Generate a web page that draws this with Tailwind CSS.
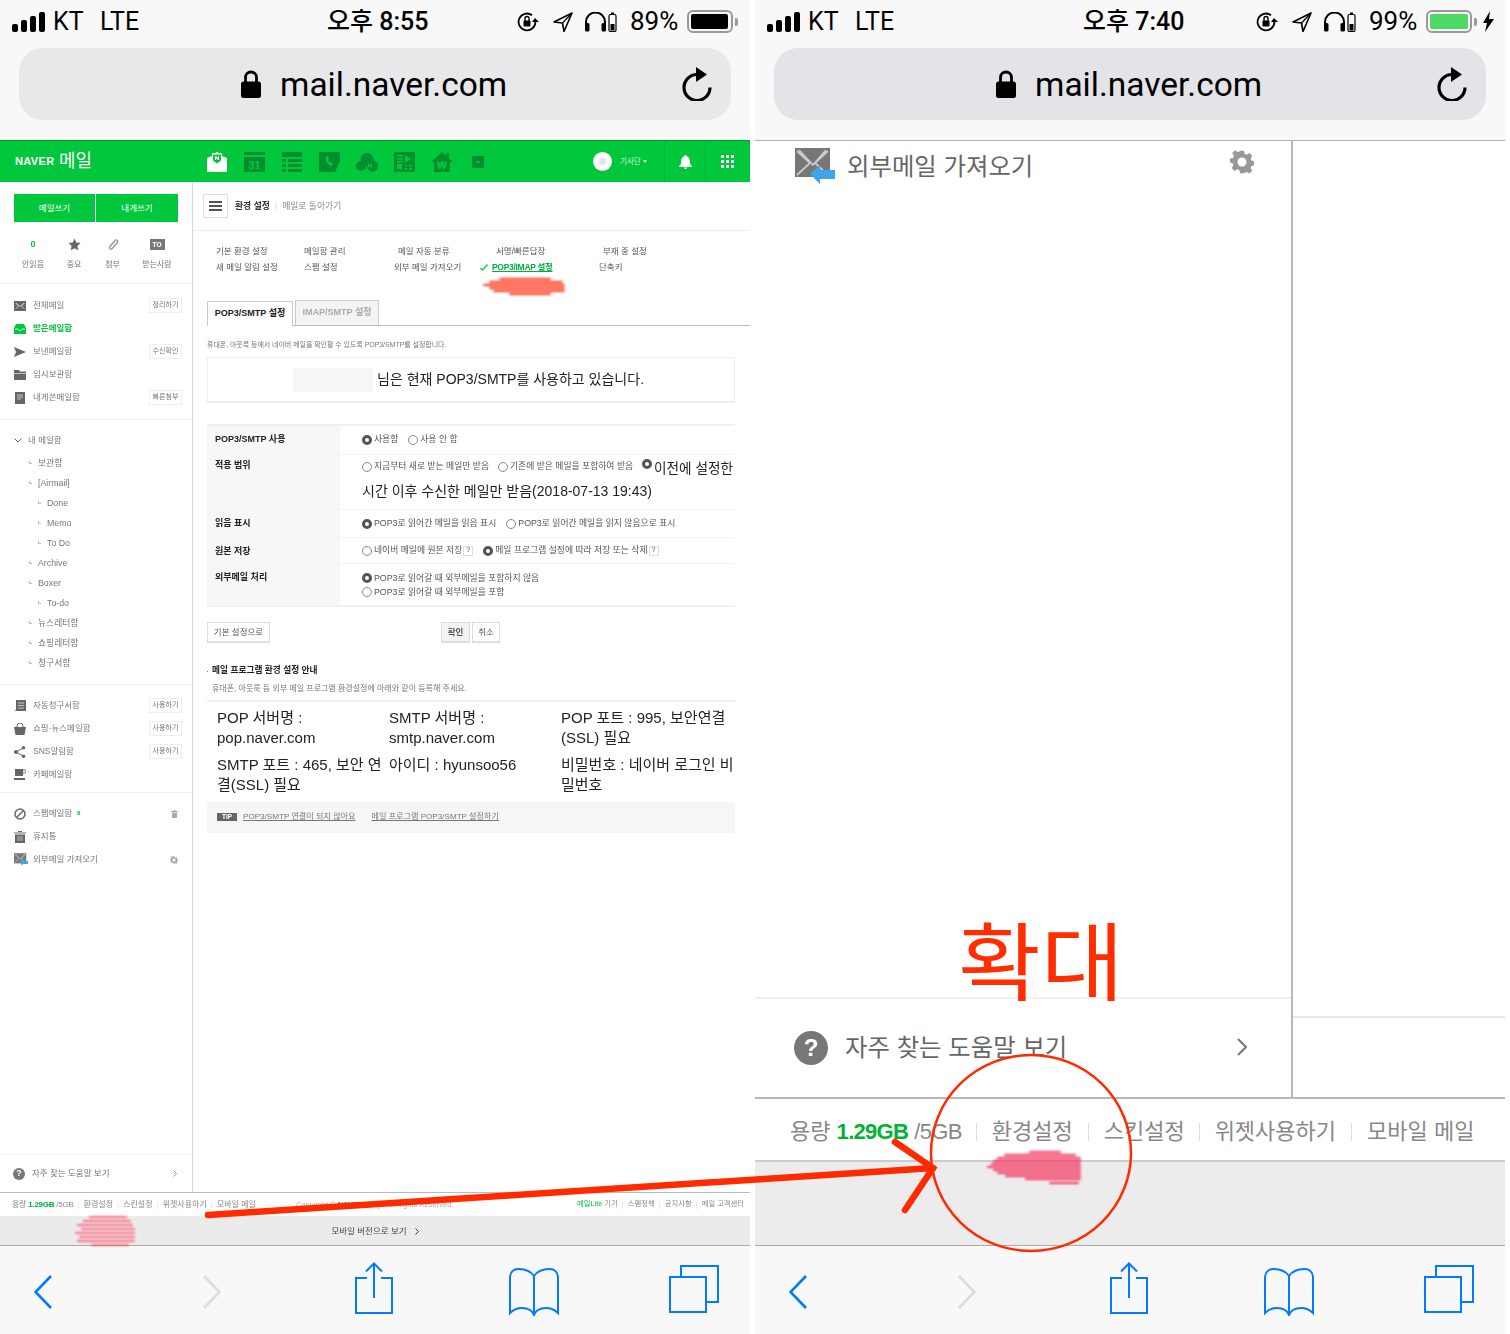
<!DOCTYPE html>
<html lang="ko">
<head>
<meta charset="UTF-8">
<title>POP3/SMTP 설정</title>
<script src="https://cdn.jsdelivr.net/npm/@tailwindcss/browser@4"></script>
</head>
<body class="bg-white font-['Liberation_Sans','Noto_Sans_CJK_KR',sans-serif]">

<svg class="hidden">
  <symbol id="signal" viewBox="0 0 33 20"><rect x="0" y="12" width="6" height="8" rx="2"/><rect x="9" y="8" width="6" height="12" rx="2"/><rect x="18" y="4" width="6" height="16" rx="2"/><rect x="27" y="0" width="6" height="20" rx="2"/></symbol>
  <symbol id="rotlock" viewBox="0 0 22 20"><path d="M15 3.2A8.4 8.4 0 1 0 18.4 10" fill="none" stroke="currentColor" stroke-width="1.8"/><path d="M18 6l4 4h-7z"/><rect x="6.5" y="8.5" width="7" height="6" rx="1"/><path d="M8 9V6.5a2 2 0 0 1 4 0V9" fill="none" stroke="currentColor" stroke-width="1.4"/></symbol>
  <symbol id="location" viewBox="0 0 20 20"><path d="M19 1L1 10l8.500 1L11 19.500z" fill="none" stroke="currentColor" stroke-width="1.600" stroke-linejoin="round"/><path d="M19 1L9.500 11" stroke="currentColor" stroke-width="1.200"/></symbol>
  <symbol id="headphones" viewBox="0 0 33 20"><path d="M2 17V10a9.500 9.500 0 0 1 19 0v7" fill="none" stroke="currentColor" stroke-width="2"/><rect x="1" y="11" width="4.500" height="8.500" rx="1.500"/><rect x="17.500" y="11" width="4.500" height="8.500" rx="1.500"/><rect x="25" y="2.500" width="7" height="17" rx="1.500" fill="none" stroke="currentColor" stroke-width="1.200"/><rect x="27" y="0.500" width="3" height="2"/><rect x="26.500" y="12" width="4" height="6.500"/></symbol>
  <symbol id="lock" viewBox="0 0 20 28"><path d="M4.500 13V7.500a5.500 5.500 0 0 1 11 0V13" fill="none" stroke="currentColor" stroke-width="2.800"/><rect x="0" y="11.500" width="20" height="16.500" rx="2.500"/></symbol>
  <symbol id="reload" viewBox="0 0 30 34"><path d="M15 7.500A13 13 0 1 0 28 20.500" fill="none" stroke="currentColor" stroke-width="3.200"/><path d="M14 0l11 7.500-11 7.500z"/></symbol>
  <symbol id="back" viewBox="0 0 18 34"><path d="M17 1L1.500 17 17 33" fill="none" stroke="currentColor" stroke-width="2.600"/></symbol>
  <symbol id="forward" viewBox="0 0 18 34"><path d="M1 1l15.500 16L1 33" fill="none" stroke="currentColor" stroke-width="2.600"/></symbol>
  <symbol id="share" viewBox="0 0 38 52"><path d="M12 16H1v35h36V16H26" fill="none" stroke="currentColor" stroke-width="2"/><path d="M19 36V1.500M11 9.500l8-8 8 8" fill="none" stroke="currentColor" stroke-width="2"/></symbol>
  <symbol id="book" viewBox="0 0 50 48"><path d="M25 8C21 2 14 1 9 1 5 1 1 4 1 9v36c4-4 8-5 12-5 5 0 10 2 12 7 2-5 7-7 12-7 4 0 8 1 12 5V9c0-5-4-8-8-8-5 0-12 1-16 7zM25 8v39" fill="none" stroke="currentColor" stroke-width="2"/></symbol>
  <symbol id="tabs" viewBox="0 0 50 48"><rect x="1" y="12" width="36" height="35" fill="none" stroke="currentColor" stroke-width="2"/><path d="M12 12V1h37v36H38" fill="none" stroke="currentColor" stroke-width="2"/></symbol>
  <symbol id="gear" viewBox="0 0 24 24"><path d="M10 1h4l.7 3.200 2 .8L19.500 3.300l2.800 2.800-1.700 2.800.8 2 3.100.7v4l-3.100.7-.8 2 1.700 2.800-2.800 2.800-2.800-1.700-2 .8L14 23.500h-4l-.7-3.200-2-.8-2.800 1.700-2.800-2.800 1.700-2.800-.8-2L0 12.900v-4l3.100-.7.8-2L2.200 3.400 5 .6l2.800 1.700 2-.8z" transform="translate(0 -.3)"/><circle cx="12" cy="12" r="4.500" fill="#fff"/></symbol>
  <symbol id="extmail" viewBox="0 0 40 36"><rect x="0" y="0" width="35" height="29" fill="#777"/><path d="M2 3l13 12L2 27M33 3L20 15l13 12M4 2l14 15L31 2" fill="none" stroke="#ccc" stroke-width="1.800"/><path d="M15 26l10-9v5h15v9H25v5z" fill="#3ea6e8"/></symbol>
</svg>

<div class="flex w-[1510px] h-[1334px] overflow-hidden relative">

  <!-- left phone -->
  <div class="w-[750px] h-[1334px] flex flex-col shrink-0">
    <div class="h-[140px] bg-[#f8f8f8] shrink-0 font-['Roboto','Noto_Sans_CJK_KR',sans-serif] text-black">
      <div class="h-[42px] pt-px flex items-center text-[25px]">
        <div class="w-[327px] pl-3 flex items-center">
          <svg class="w-[33px] h-[20px] fill-current"><use href="#signal"/></svg>
          <span class="ml-2 w-[47px]">KT</span>
          <span>LTE</span>
        </div>
        <div class="w-[104px] font-medium whitespace-nowrap">오후 8:55</div>
        <svg class="ml-[86px] w-[22px] h-[20px] fill-current"><use href="#rotlock"/></svg>
        <svg class="ml-[14px] w-[20px] h-[20px] fill-current"><use href="#location"/></svg>
        <svg class="ml-[11px] w-[33px] h-[20px] fill-current"><use href="#headphones"/></svg>
        <span class="ml-[13px] w-[57px] text-[26px]">89%</span>
        <div class="w-[46px] h-[23px] rounded-[6px] border-2 border-[#999] p-[2px]"><div class="w-[37px] h-full bg-black rounded-[2px]"></div></div>
        <div class="ml-[2px] w-[3px] h-[8px] bg-[#999] rounded-r-[2px]"></div>
      </div>
      <div class="mt-[6px] mx-[19px] h-[72px] w-[712px] rounded-[24px] bg-[#e8e8ea] flex items-center">
        <svg class="ml-[222px] w-[20px] h-[28px] fill-current"><use href="#lock"/></svg>
        <span class="ml-[19px] pt-[2px] text-[33.500px]">mail.naver.com</span>
        <svg class="ml-auto mr-[19px] w-[30px] h-[34px] fill-current"><use href="#reload"/></svg>
      </div>
    </div>

    <div class="blur-[0.3px] flex-1 flex flex-col min-h-0">
      <!-- green header -->
      <div class="h-[42px] shrink-0 bg-[#00c73c] border-t border-[#009a30] flex items-center text-white">
        <span class="ml-[15px] w-[44px] text-[11px] font-black tracking-[0.4px]">NAVER</span>
        <span class="w-[148px] text-[18px]">메일</span>
        <svg class="w-[20px] h-[20px]" viewBox="0 0 20 20"><path d="M0 6l5-2V1h3l2-1 2 1h3v3l5 2v14H0z" fill="#fff"/><path d="M6 2.500h8v6l-4 3-4-3z" fill="#00c73c"/><path d="M8 4h1l2 2V4h1v4h-1L9 6v2H8z" fill="#fff"/></svg>
        <svg class="ml-[17px] w-[21px] h-[20px]" viewBox="0 0 21 20"><path d="M0 0h21v3H0zM0 5h21v15H0z" fill="#008f2c"/><text x="10.500" y="17" font-size="11" font-weight="700" text-anchor="middle" fill="#00c73c">31</text></svg>
        <svg class="ml-[17px] w-[20px] h-[20px]" viewBox="0 0 20 20"><path d="M0 0h20v5H0zM0 7h4v3H0zM6 7h14v3H6zM0 12h4v3H0zM6 12h14v3H6zM0 17h4v3H0zM6 17h14v3H6z" fill="#008f2c"/></svg>
        <svg class="ml-[17px] w-[21px] h-[20px]" viewBox="0 0 21 20"><path d="M0 0h21v9l-5 11H0z" fill="#008f2c"/><path d="M7 5c-1 3 1 7 5 9l2-2-2-2-1 1-2-3 1-1-1-3z" fill="#00c73c"/></svg>
        <svg class="ml-[16px] w-[22px] h-[20px]" viewBox="0 0 22 20"><g fill="#008f2c"><circle cx="11" cy="7.500" r="6.500"/><circle cx="5" cy="14" r="5"/><circle cx="16.500" cy="14" r="5.500"/></g><path d="M12 11.500h1l2 2v-2h1v4h-1l-2-2v2h-1z" fill="#00c73c"/></svg>
        <svg class="ml-[16px] w-[21px] h-[20px]" viewBox="0 0 21 20"><path d="M0 0h21v20H0z" fill="#008f2c"/><path d="M3 3h6v1.500H3zM3 6h6v1.500H3zM3 9h6v1.500H3zM3 12h5v5H3zM11 3l6 4-6 4zM11 13h2v1.500h-2zM15 13h3v1.500h-3zM11 16h2v1.500h-2zM15 16h3v1.500h-3z" fill="#00c73c"/></svg>
        <svg class="ml-[16px] w-[22px] h-[20px]" viewBox="0 0 22 20"><path d="M0 10L11 0l4 3.500V1h3v5l4 4h-3v10H3V10z" fill="#008f2c"/><text x="11" y="17" font-size="10" font-weight="700" text-anchor="middle" fill="#00c73c">₩</text></svg>
        <svg class="ml-[19px] w-[12px] h-[12px]" viewBox="0 0 12 12"><path d="M0 0h12v12H0z" fill="#008f2c"/><path d="M3.500 5h5L6 8z" fill="#00c73c"/></svg>
        <div class="ml-[109px] w-[19px] h-[19px] rounded-full bg-white flex items-center justify-center"><div class="w-[7px] h-[7px] rounded-full bg-[#e4e4e4]"></div></div>
        <span class="ml-[8px] text-[7.500px] text-white/80 whitespace-nowrap">기사단</span>
        <div class="ml-[2px] w-0 h-0 border-x-[2px] border-t-[3px] border-x-transparent border-t-white"></div>
        <div class="ml-[17px] w-px h-[41px] bg-[#00b536]"></div>
        <svg class="ml-[14px] w-[13px] h-[14px] fill-white" viewBox="0 0 13 14"><path d="M6.500 0a1.200 1.200 0 0 1 1.200 1.300C10 2 10.800 4 10.800 6.500c0 2.500.9 3.500 2.200 4.800v.7H0v-.7c1.300-1.300 2.200-2.300 2.200-4.800 0-2.500.8-4.500 3.100-5.200A1.200 1.200 0 0 1 6.500 0zM5 12.500h3a1.500 1.500 0 0 1-3 0z"/></svg>
        <div class="ml-[13px] w-px h-[41px] bg-[#00b536]"></div>
        <div class="ml-[15px] grid grid-cols-3 gap-[2px]">
          <i class="block w-[3px] h-[3px] bg-white"></i><i class="block w-[3px] h-[3px] bg-white"></i><i class="block w-[3px] h-[3px] bg-white"></i>
          <i class="block w-[3px] h-[3px] bg-white"></i><i class="block w-[3px] h-[3px] bg-white"></i><i class="block w-[3px] h-[3px] bg-white"></i>
          <i class="block w-[3px] h-[3px] bg-white"></i><i class="block w-[3px] h-[3px] bg-white"></i><i class="block w-[3px] h-[3px] bg-white"></i>
        </div>
      </div>

      <div class="flex-1 flex min-h-0">
        <!-- sidebar -->
        <div class="w-[193px] shrink-0 border-r border-[#d8d8d8] flex flex-col text-[8.500px] text-[#777]">
          <div class="mt-[12px] ml-[14px] flex gap-px text-white">
            <div class="w-[81px] h-[28px] pt-px bg-[#00c73c] flex items-center justify-center">메일쓰기</div>
            <div class="w-[82px] h-[28px] pt-px bg-[#00c73c] flex items-center justify-center">내게쓰기</div>
          </div>
          <div class="h-[62px] border-b border-[#eee] relative flex text-[8px]">
            <div class="ml-[16px] w-[34px] flex flex-col items-center pt-[16px]"><b class="h-[12px] text-[#00c73c] text-[9px] leading-[12px]">0</b><span class="mt-[9px] w-[24px] text-center whitespace-nowrap">안읽음</span></div>
            <div class="w-[40px] flex flex-col items-center pt-[16px] ml-[4px]"><svg class="w-[13px] h-[13px] fill-[#666]" viewBox="0 0 24 24"><path d="M12 1l3.400 7.300 7.800 1-5.800 5.400 1.600 8L12 18.700 5 22.700l1.600-8L.8 9.300l7.800-1z"/></svg><span class="mt-[8px]">중요</span></div>
            <div class="w-[37px] flex flex-col items-center pt-[16px]"><svg class="w-[14px] h-[13px]" viewBox="0 0 13 13"><path d="M9 2L3.500 8.500c-1.500 2 .8 3.500 2.300 2l5-6c1.200-1.700-.7-3.500-2.300-2L3 9" fill="none" stroke="#999" stroke-width="1.400"/></svg><span class="mt-[8px]">첨부</span></div>
            <div class="w-[52px] flex flex-col items-center pt-[17px]"><b class="w-[15px] h-[11px] bg-[#777] text-white text-[7px] leading-[11px] text-center">TO</b><span class="mt-[9px] whitespace-nowrap">받는사람</span></div>
          </div>

          <div class="pt-[10px] pb-[10px] border-b border-[#f0f0f0]">
            <div class="h-[23px] pl-[14px] pr-[10px] flex items-center">
              <svg class="w-[12px] h-[10px] shrink-0" viewBox="0 0 12 10"><rect width="12" height="10" fill="#666"/><path d="M1.500 2l3 3-3 3M10.500 2l-3 3 3 3M2 2l4 3.500L10 2" fill="none" stroke="#ddd" stroke-width=".8"/></svg>
              <span class="ml-[7px]">전체메일</span><span class="ml-auto w-[33px] h-[15px] border border-[#eee] text-[7px] flex items-center justify-center">정리하기</span>
            </div>
            <div class="h-[23px] pl-[14px] pr-[10px] flex items-center text-[#00c73c] font-bold">
              <svg class="w-[12px] h-[10px] shrink-0" viewBox="0 0 12 10"><path d="M2 0h8l2 4v6H0V4z" fill="#00c73c"/><path d="M1 5h3l1 1.500h2L8 5h3" fill="none" stroke="#fff" stroke-width=".7"/></svg>
              <span class="ml-[7px]">받은메일함</span>
            </div>
            <div class="h-[23px] pl-[14px] pr-[10px] flex items-center">
              <svg class="w-[12px] h-[12px] shrink-0" viewBox="0 0 12 12"><path d="M0 1l12 5L0 11l2-5z" fill="#666"/></svg>
              <span class="ml-[7px]">보낸메일함</span><span class="ml-auto w-[33px] h-[15px] border border-[#eee] text-[7px] flex items-center justify-center">수신확인</span>
            </div>
            <div class="h-[23px] pl-[14px] pr-[10px] flex items-center">
              <svg class="w-[12px] h-[10px] shrink-0" viewBox="0 0 12 10"><path d="M0 0h5l1 1.500h6V10H0z" fill="#666"/><path d="M0 3.500h12" stroke="#fff" stroke-width=".6"/></svg>
              <span class="ml-[7px]">임시보관함</span>
            </div>
            <div class="h-[23px] pl-[14px] pr-[10px] flex items-center">
              <svg class="w-[12px] h-[12px] shrink-0" viewBox="0 0 12 12"><path d="M1 0h10v12H1z" fill="#666"/><path d="M3 3h6M3 5h6M3 7h4" stroke="#ddd" stroke-width=".8"/></svg>
              <span class="ml-[7px]">내게쓴메일함</span><span class="ml-auto w-[33px] h-[15px] border border-[#eee] text-[7px] flex items-center justify-center">빠른첨부</span>
            </div>
          </div>

          <div class="pt-[9px] pb-[10px] border-b border-[#f0f0f0]">
            <div class="h-[25px] pb-[2px] pl-[14px] flex items-center">
              <svg class="w-[8px] h-[5px]" viewBox="0 0 8 5"><path d="M.5.500L4 4 7.500.500" fill="none" stroke="#666"/></svg>
              <span class="ml-[6px]">내 메일함</span>
            </div>
            <div class="h-5 pl-[29px] flex items-center text-[8.800px]"><span class="w-[3px] h-[3px] -mt-[3px] border-l border-b border-[#bbb]"></span><span class="ml-[6px]">보관함</span></div>
            <div class="h-5 pl-[29px] flex items-center text-[8.800px]"><span class="w-[3px] h-[3px] -mt-[3px] border-l border-b border-[#bbb]"></span><span class="ml-[6px]">[Airmail]</span></div>
            <div class="h-5 pl-[38px] flex items-center text-[8.800px]"><span class="w-[3px] h-[3px] -mt-[3px] border-l border-b border-[#bbb]"></span><span class="ml-[6px]">Done</span></div>
            <div class="h-5 pl-[38px] flex items-center text-[8.800px]"><span class="w-[3px] h-[3px] -mt-[3px] border-l border-b border-[#bbb]"></span><span class="ml-[6px]">Memo</span></div>
            <div class="h-5 pl-[38px] flex items-center text-[8.800px]"><span class="w-[3px] h-[3px] -mt-[3px] border-l border-b border-[#bbb]"></span><span class="ml-[6px]">To Do</span></div>
            <div class="h-5 pl-[29px] flex items-center text-[8.800px]"><span class="w-[3px] h-[3px] -mt-[3px] border-l border-b border-[#bbb]"></span><span class="ml-[6px]">Archive</span></div>
            <div class="h-5 pl-[29px] flex items-center text-[8.800px]"><span class="w-[3px] h-[3px] -mt-[3px] border-l border-b border-[#bbb]"></span><span class="ml-[6px]">Boxer</span></div>
            <div class="h-5 pl-[38px] flex items-center text-[8.800px]"><span class="w-[3px] h-[3px] -mt-[3px] border-l border-b border-[#bbb]"></span><span class="ml-[6px]">To-do</span></div>
            <div class="h-5 pl-[29px] flex items-center text-[8.800px]"><span class="w-[3px] h-[3px] -mt-[3px] border-l border-b border-[#bbb]"></span><span class="ml-[6px]">뉴스레터함</span></div>
            <div class="h-5 pl-[29px] flex items-center text-[8.800px]"><span class="w-[3px] h-[3px] -mt-[3px] border-l border-b border-[#bbb]"></span><span class="ml-[6px]">쇼핑레터함</span></div>
            <div class="h-5 pl-[29px] flex items-center text-[8.800px]"><span class="w-[3px] h-[3px] -mt-[3px] border-l border-b border-[#bbb]"></span><span class="ml-[6px]">청구서함</span></div>
          </div>

          <div class="pt-[9px] pb-[6px] border-b border-[#f0f0f0]">
            <div class="h-[23px] pl-[14px] pr-[10px] flex items-center">
              <svg class="w-[12px] h-[12px] shrink-0" viewBox="0 0 12 12"><path d="M2 0h10v11H0l2-1z" fill="#666"/><path d="M4 3h6M4 5.500h6M4 8h6" stroke="#ddd" stroke-width=".8"/></svg>
              <span class="ml-[7px]">자동청구서함</span><span class="ml-auto w-[33px] h-[15px] border border-[#eee] text-[7px] flex items-center justify-center">사용하기</span>
            </div>
            <div class="h-[23px] pl-[14px] pr-[10px] flex items-center">
              <svg class="w-[12px] h-[12px] shrink-0" viewBox="0 0 12 12"><path d="M0 4h12l-1.500 8h-9z" fill="#666"/><path d="M3 5V3a3 3 0 0 1 6 0v2" fill="none" stroke="#666"/></svg>
              <span class="ml-[7px]">쇼핑·뉴스메일함</span><span class="ml-auto w-[33px] h-[15px] border border-[#eee] text-[7px] flex items-center justify-center">사용하기</span>
            </div>
            <div class="h-[23px] pl-[14px] pr-[10px] flex items-center">
              <svg class="w-[12px] h-[12px] shrink-0" viewBox="0 0 12 12"><circle cx="2" cy="6" r="2" fill="#666"/><circle cx="9.500" cy="1.800" r="1.800" fill="#666"/><circle cx="9.500" cy="10.200" r="1.800" fill="#666"/><path d="M2 6l7.500-4.200M2 6l7.500 4.200" stroke="#666"/></svg>
              <span class="ml-[7px]">SNS알림함</span><span class="ml-auto w-[33px] h-[15px] border border-[#eee] text-[7px] flex items-center justify-center">사용하기</span>
            </div>
            <div class="h-[23px] pl-[14px] pr-[10px] flex items-center">
              <svg class="w-[12px] h-[12px] shrink-0" viewBox="0 0 12 12"><path d="M1 0h8v7H1zM0 9h11v2H0z" fill="#666"/><path d="M9 1h1.500a1.300 1.300 0 0 1 0 3H9" fill="none" stroke="#666"/></svg>
              <span class="ml-[7px]">카페메일함</span>
            </div>
          </div>

          <div class="pt-[9px]">
            <div class="h-[23px] pl-[14px] pr-[14px] flex items-center">
              <svg class="w-[12px] h-[12px] shrink-0" viewBox="0 0 12 12"><circle cx="6" cy="6" r="5" fill="none" stroke="#666" stroke-width="1.500"/><path d="M2.500 9.500l7-7" stroke="#666" stroke-width="1.500"/></svg>
              <span class="ml-[7px]">스팸메일함</span><b class="ml-[5px] text-[#00c73c] text-[6px]">8</b>
              <svg class="ml-auto w-[7px] h-[8px] fill-[#aaa]" viewBox="0 0 7 8"><path d="M0 1h7v1H0zM2.500 0h2v1h-2zM1 2.500h5V8H1z"/></svg>
            </div>
            <div class="h-[23px] pl-[14px] pr-[14px] flex items-center">
              <svg class="w-[12px] h-[12px] shrink-0" viewBox="0 0 12 12"><path d="M0 1.500h12v1H0zM4 0h4v1H4zM1 3.500h10V12H1z" fill="#666"/><path d="M4 5v5M6 5v5M8 5v5" stroke="#ddd" stroke-width=".7"/></svg>
              <span class="ml-[7px]">휴지통</span>
            </div>
            <div class="h-[23px] pl-[14px] pr-[14px] flex items-center">
              <svg class="w-[14px] h-[13px] shrink-0"><use href="#extmail"/></svg>
              <span class="ml-[5px]">외부메일 가져오기</span>
              <svg class="ml-auto w-[8px] h-[8px] fill-[#aaa]"><use href="#gear"/></svg>
            </div>
          </div>

          <div class="mt-auto h-[38px] border-t border-[#f4f4f4] pl-[13px] pr-[15px] flex items-center">
            <span class="w-[12px] h-[12px] rounded-full bg-[#777] text-white text-[9px] font-bold flex items-center justify-center">?</span>
            <span class="ml-[7px]">자주 찾는 도움말 보기</span>
            <svg class="ml-auto w-[4px] h-[7px]" viewBox="0 0 4 7"><path d="M.5.500l3 3-3 3" fill="none" stroke="#777" stroke-width=".8"/></svg>
          </div>
        </div>

        <!-- main -->
        <div class="flex-1 min-w-0 text-[8.800px] text-[#666]">
          <div class="h-[49px] border-b border-[#eee] flex items-center pl-[10px]">
            <div class="w-[25px] h-[24px] border border-[#ddd] flex flex-col items-center justify-center gap-[2.500px]">
              <i class="block w-[13px] h-[1.500px] bg-[#555]"></i><i class="block w-[13px] h-[1.500px] bg-[#555]"></i><i class="block w-[13px] h-[1.500px] bg-[#555]"></i>
            </div>
            <b class="ml-[7px] pt-[2px] text-[#333]">환경 설정</b>
            <span class="ml-[5px] pt-[2px] text-[#ddd]">|</span>
            <span class="ml-[5px] pt-[2px] text-[#888]">메일로 돌아가기</span>
          </div>

          <div class="h-[70px] pt-[12px] pl-[23px] grid grid-cols-[88px_90px_86px_119px_1fr] content-start leading-[16px] text-[#555] text-[8.500px]">
            <div><div>기본 환경 설정</div><div>새 메일 알림 설정</div></div>
            <div><div>메일함 관리</div><div>스팸 설정</div></div>
            <div><div class="pl-[4px]">메일 자동 분류</div><div>외부 메일 가져오기</div></div>
            <div><div class="pl-[16px]">서명/빠른답장</div><div class="flex items-center"><svg class="w-[8px] h-[7px]" viewBox="0 0 8 7"><path d="M.5 4l2 2L7.500.500" fill="none" stroke="#00c73c" stroke-width="1.200"/></svg><span class="ml-[4px] text-[#00b336] underline font-bold tracking-[-0.3px]">POP3/IMAP 설정</span></div></div>
            <div><div class="pl-[4px]">부재 중 설정</div><div>단축키</div></div>
          </div>

          <div class="pl-[14px]">
            <div class="h-[25px] flex items-end border-b border-[#bbb] text-[9px]">
              <div class="w-[86px] h-[25px] border border-b-0 border-[#ccc] bg-white relative top-px flex items-center justify-center font-bold text-[#222] whitespace-nowrap">POP3/SMTP 설정</div>
              <div class="ml-[2px] w-[84px] h-[25px] border border-b-0 border-[#ccc] bg-[#f4f4f4] flex items-center justify-center font-bold text-[#aaa] whitespace-nowrap">IMAP/SMTP 설정</div>
            </div>
            <div class="w-[528px]">
              <p class="mt-[13px] h-[11px] text-[7px] leading-[11px] tracking-[-0.05px] text-[#777] whitespace-nowrap">휴대폰, 아웃룩 등에서 네이버 메일을 확인할 수 있도록 POP3/SMTP를 설정합니다.</p>
              <div class="mt-[7px] h-[46px] border border-[#eee] border-b-2 flex items-center pl-[85px] text-[14px] text-[#222]">
                <span class="w-[80px] h-[24px] bg-[#f5f6f5]"></span><span class="ml-[4px] whitespace-nowrap">님은 현재 POP3/SMTP를 사용하고 있습니다.</span>
              </div>

              <div class="mt-[21px] border-y-2 border-[#f0f0f0] text-[#555]">
                <div class="h-[28px] flex">
                  <b class="w-[133px] bg-[#f7f7f7] pl-[8px] pt-[7px] text-[9px] text-[#222]">POP3/SMTP 사용</b>
                  <div class="pl-[22px] flex items-center"><span class="w-[10px] h-[10px] shrink-0 rounded-full border-[3px] border-[#555]"></span><span class="ml-[2px]">사용함</span><span class="ml-[10px] w-[10px] h-[10px] shrink-0 rounded-full border border-[#888]"></span><span class="ml-[2px]">사용 안 함</span></div>
                </div>
                <div class="h-[55px] flex border-t border-[#f4f4f4]">
                  <b class="w-[133px] shrink-0 bg-[#f7f7f7] pl-[8px] pt-[4px] text-[9px] text-[#222]">적용 범위</b>
                  <div class="pl-[22px]">
                    <div class="h-[24px] flex items-center whitespace-nowrap"><span class="w-[10px] h-[10px] shrink-0 rounded-full border border-[#888]"></span><span class="ml-[2px]">지금부터 새로 받는 메일만 받음</span><span class="ml-[9px] w-[10px] h-[10px] shrink-0 rounded-full border border-[#888]"></span><span class="ml-[2px]">기존에 받은 메일을 포함하여 받음</span><span class="ml-[9px] -mt-[6px] w-[10px] h-[10px] shrink-0 rounded-full border-[3px] border-[#555]"></span><span class="ml-[2px] mt-[4px] text-[13.600px] text-[#222]">이전에 설정한</span></div>
                    <div class="h-[24px] flex items-center text-[14px] text-[#222] whitespace-nowrap">시간 이후 수신한 메일만 받음(2018-07-13 19:43)</div>
                  </div>
                </div>
                <div class="h-[28px] flex border-t border-[#f4f4f4]">
                  <b class="w-[133px] bg-[#f7f7f7] pl-[8px] pt-[7px] text-[9px] text-[#222]">읽음 표시</b>
                  <div class="pl-[22px] flex items-center whitespace-nowrap"><span class="w-[10px] h-[10px] shrink-0 rounded-full border-[3px] border-[#555]"></span><span class="ml-[2px]">POP3로 읽어간 메일을 읽음 표시</span><span class="ml-[10px] w-[10px] h-[10px] shrink-0 rounded-full border border-[#888]"></span><span class="ml-[2px]">POP3로 읽어간 메일을 읽지 않음으로 표시</span></div>
                </div>
                <div class="h-[26px] flex border-t border-[#f4f4f4]">
                  <b class="w-[133px] bg-[#f7f7f7] pl-[8px] pt-[7px] text-[9px] text-[#222]">원본 저장</b>
                  <div class="pl-[22px] flex items-center whitespace-nowrap"><span class="w-[10px] h-[10px] shrink-0 rounded-full border border-[#888]"></span><span class="ml-[2px]">네이버 메일에 원본 저장</span><span class="ml-[1px] w-[10px] h-[10px] border border-[#ddd] text-[7px] flex items-center justify-center">?</span><span class="ml-[10px] w-[10px] h-[10px] shrink-0 rounded-full border-[3px] border-[#555]"></span><span class="ml-[2px]">메일 프로그램 설정에 따라 저장 또는 삭제</span><span class="ml-[1px] w-[10px] h-[10px] border border-[#ddd] text-[7px] flex items-center justify-center">?</span></div>
                </div>
                <div class="h-[42px] flex border-t border-[#f4f4f4]">
                  <b class="w-[133px] bg-[#f7f7f7] pl-[8px] pt-[7px] text-[9px] text-[#222]">외부메일 처리</b>
                  <div class="pl-[22px] pt-[7px] leading-[14px]">
                    <div class="flex items-center"><span class="w-[10px] h-[10px] shrink-0 rounded-full border-[3px] border-[#555]"></span><span class="ml-[2px]">POP3로 읽어갈 때 외부메일을 포함하지 않음</span></div>
                    <div class="flex items-center"><span class="w-[10px] h-[10px] shrink-0 rounded-full border border-[#888]"></span><span class="ml-[2px]">POP3로 읽어갈 때 외부메일을 포함</span></div>
                  </div>
                </div>
              </div>

              <div class="mt-[15px] h-[21px] flex text-[#555] text-[8.500px]">
                <div class="w-[63px] border border-[#ddd] border-b-2 flex items-center justify-center">기본 설정으로</div>
                <div class="ml-[171px] w-[29px] bg-[#f3f3f3] border border-[#ddd] border-b-2 font-bold flex items-center justify-center">확인</div>
                <div class="ml-[2px] w-[28px] border border-[#ddd] border-b-2 flex items-center justify-center">취소</div>
              </div>

              <div class="mt-[22px] h-[12px] flex items-center font-bold text-[#222] text-[8.700px]"><i class="block w-px h-px bg-[#777] mr-[4px]"></i>메일 프로그램 환경 설정 안내</div>
              <p class="mt-[6px] pl-[5px] h-[12px] text-[8px] leading-[12px] text-[#777] whitespace-nowrap">휴대폰, 아웃룩 등 외부 메일 프로그램 환경설정에 아래와 같이 등록해 주세요.</p>
              <div class="mt-[5px] border-t-2 border-[#f0f0f0] pt-[6px] pl-[10px] grid grid-cols-[172px_172px_176px] text-[15px] leading-[20px] text-[#222]">
                <div class="pr-[5px] h-[47px]">POP 서버명 : pop.naver.com</div>
                <div class="pr-[5px] h-[47px]">SMTP 서버명 : smtp.naver.com</div>
                <div class="pr-[9px] h-[47px]">POP 포트 : 995, 보안연결(SSL) 필요</div>
                <div class="pr-[5px]">SMTP 포트 : 465, 보안 연결(SSL) 필요</div>
                <div class="pr-[5px]">아이디 : hyunsoo56</div>
                <div>비밀번호 : 네이버 로그인 비밀번호</div>
              </div>
              <div class="mt-[7px] h-[31px] bg-[#f6f6f6] pl-[10px] flex items-center text-[8.100px] text-[#777] pb-[1px]">
                <b class="w-[20px] h-[8px] bg-[#666] text-white text-[6.500px] leading-[8px] text-center">TIP</b>
                <span class="ml-[6px] underline whitespace-nowrap">POP3/SMTP 연결이 되지 않아요</span>
                <span class="ml-[16px] underline whitespace-nowrap">메일 프로그램 POP3/SMTP 설정하기</span>
              </div>
            </div>
          </div>
        </div>
      </div>

      <!-- footer -->
      <div class="h-[24px] shrink-0 border-t border-[#bbb] pl-[12px] pr-[6px] flex items-center text-[8px] text-[#888] whitespace-nowrap">
        <span class="tracking-[-0.25px]">용량 <b class="text-[#00b336]">1.29GB</b> /5GB</span>
        <span class="mx-[4px] text-[#ddd]">|</span><span>환경설정</span>
        <span class="mx-[4px] text-[#ddd]">|</span><span>스킨설정</span>
        <span class="mx-[4px] text-[#ddd]">|</span><span>위젯사용하기</span>
        <span class="mx-[4px] text-[#ddd]">|</span><span>모바일 메일</span>
        <span class="ml-[40px] text-[#aaa] text-[7.500px]">Copyright © <b class="text-[#00b336]">NAVER</b> Corp. All Rights Reserved.</span>
        <span class="ml-auto text-[7.300px]"><span class="text-[#00c73c]">메일Lite</span> 기기</span>
        <span class="mx-[4px] text-[#ddd]">|</span><span class="text-[7.300px]">스팸정책</span>
        <span class="mx-[4px] text-[#ddd]">|</span><span class="text-[7.300px]">공지사항</span>
        <span class="mx-[4px] text-[#ddd]">|</span><span class="text-[7.300px]">메일 고객센터</span>
      </div>
      <div class="h-[30px] pt-px shrink-0 bg-[#ebebeb] border-b border-[#aaa] flex items-center justify-center text-[8.500px] text-[#444]">
        모바일 버전으로 보기
        <svg class="ml-[8px] w-[4px] h-[7px]" viewBox="0 0 4 7"><path d="M.5.500l3 3-3 3" fill="none" stroke="#333"/></svg>
      </div>
    </div>

    <div class="h-[88px] shrink-0 bg-[#f8f8f8] text-[#007aff] flex items-start">
      <svg class="mt-[29px] ml-[34px] w-[18px] h-[34px]"><use href="#back"/></svg>
      <svg class="mt-[29px] ml-[151px] w-[18px] h-[34px] text-[#dcdcdc]"><use href="#forward"/></svg>
      <svg class="mt-[16px] ml-[134px] w-[38px] h-[52px]"><use href="#share"/></svg>
      <svg class="mt-[22px] ml-[116px] w-[50px] h-[48px]"><use href="#book"/></svg>
      <svg class="mt-[19px] ml-[110px] w-[50px] h-[48px]"><use href="#tabs"/></svg>
    </div>
  </div>

  <!-- right phone -->
  <div class="ml-[5px] w-[750px] h-[1334px] flex flex-col shrink-0">
    <div class="h-[141px] bg-[#f8f8f8] shrink-0 border-b border-[#b0b0b0] font-['Roboto','Noto_Sans_CJK_KR',sans-serif] text-black">
      <div class="h-[42px] pt-px flex items-center text-[25px]">
        <div class="w-[328px] pl-3 flex items-center">
          <svg class="w-[33px] h-[20px] fill-current"><use href="#signal"/></svg>
          <span class="ml-2 w-[47px]">KT</span>
          <span>LTE</span>
        </div>
        <div class="w-[104px] font-medium whitespace-nowrap">오후 7:40</div>
        <svg class="ml-[69px] w-[22px] h-[20px] fill-current"><use href="#rotlock"/></svg>
        <svg class="ml-[14px] w-[20px] h-[20px] fill-current"><use href="#location"/></svg>
        <svg class="ml-[11px] w-[33px] h-[20px] fill-current"><use href="#headphones"/></svg>
        <span class="ml-[13px] w-[57px] text-[26px]">99%</span>
        <div class="w-[46px] h-[23px] rounded-[6px] border-2 border-[#999] p-[2px]"><div class="w-[38px] h-full bg-[#4cd964] rounded-[2px]"></div></div>
        <div class="ml-[2px] w-[3px] h-[8px] bg-[#999] rounded-r-[2px]"></div>
        <svg class="ml-[6px] w-[11px] h-[21px] fill-black" viewBox="0 0 11 21"><path d="M7 0L0 12h4l-2 9 9-13H6z"/></svg>
      </div>
      <div class="mt-[6px] mx-[19px] h-[72px] w-[712px] rounded-[24px] bg-[#e4e4e8] flex items-center">
        <svg class="ml-[222px] w-[20px] h-[28px] fill-current"><use href="#lock"/></svg>
        <span class="ml-[19px] pt-[2px] text-[33.500px]">mail.naver.com</span>
        <svg class="ml-auto mr-[19px] w-[30px] h-[34px] fill-current"><use href="#reload"/></svg>
      </div>
    </div>

    <div class="flex-1 flex min-h-0">
      <div class="w-[538px] shrink-0 border-r-2 border-[#b8b8b8] flex flex-col text-[24.400px] text-[#666]">
        <div class="h-[50px] pl-[40px] pr-[37px] flex items-center">
          <svg class="w-[40px] h-[36px] shrink-0"><use href="#extmail"/></svg>
          <span class="ml-[12px] mt-[2px] whitespace-nowrap">외부메일 가져오기</span>
          <svg class="ml-auto w-[24px] h-[24px] fill-[#999] -mt-[8px]"><use href="#gear"/></svg>
        </div>
        <div class="mt-auto h-[100px] border-t-2 border-[#f0f0f0] pl-[39px] pr-[44px] flex items-center">
          <span class="w-[34px] h-[34px] rounded-full bg-[#777] text-white text-[24px] font-bold flex items-center justify-center shrink-0">?</span>
          <span class="ml-[17px] whitespace-nowrap">자주 찾는 도움말 보기</span>
          <svg class="ml-auto -mt-[2px] w-[10px] h-[18px]" viewBox="0 0 10 18"><path d="M1 1l8 8-8 8" fill="none" stroke="#777" stroke-width="2"/></svg>
        </div>
      </div>
      <div class="flex-1 flex flex-col"><div class="mt-auto h-[81px] border-t-2 border-[#e8e8e8]"></div></div>
    </div>

    <div class="h-[65px] pt-1 shrink-0 border-y-2 border-t-[#b8b8b8] border-b-[#ccc] pl-[35px] flex items-center text-[22px] text-[#888] whitespace-nowrap">
      <span>용량 <b class="text-[#00b336] tracking-[-0.7px]">1.29GB</b> <span class="tracking-[-0.7px]">/5GB</span></span>
      <span class="ml-[14px] w-px h-[18px] bg-[#ddd]"></span><span class="ml-[15px]">환경설정</span>
      <span class="ml-[15px] w-px h-[18px] bg-[#ddd]"></span><span class="ml-[15px]">스킨설정</span>
      <span class="ml-[14px] w-px h-[18px] bg-[#ddd]"></span><span class="ml-[15px]">위젯사용하기</span>
      <span class="ml-[15px] w-px h-[18px] bg-[#ddd]"></span><span class="ml-[15px]">모바일 메일</span>
    </div>
    <div class="h-[84px] shrink-0 bg-[#ececec] border-b border-[#aaa]"></div>

    <div class="h-[88px] shrink-0 bg-[#f8f8f8] text-[#007aff] flex items-start">
      <svg class="mt-[29px] ml-[34px] w-[18px] h-[34px]"><use href="#back"/></svg>
      <svg class="mt-[29px] ml-[151px] w-[18px] h-[34px] text-[#dcdcdc]"><use href="#forward"/></svg>
      <svg class="mt-[16px] ml-[134px] w-[38px] h-[52px]"><use href="#share"/></svg>
      <svg class="mt-[22px] ml-[116px] w-[50px] h-[48px]"><use href="#book"/></svg>
      <svg class="mt-[19px] ml-[110px] w-[50px] h-[48px]"><use href="#tabs"/></svg>
    </div>
  </div>

  <!-- annotations drawn on top of the screenshots -->
  <svg class="absolute left-0 top-0 w-[1510px] h-[1334px] pointer-events-none" viewBox="0 0 1510 1334">
    <g class="blur-[1px]" fill="none" stroke-linecap="round">
      <g stroke="#ff3214" stroke-width="1.800"><path d="M500 279h50M490 282h72M484 285h80M490 288h74M494 291h70M510 294h40"/></g>
      <g stroke="#ff4a66" stroke-width="2.200" opacity=".8"><path d="M90 1217h36M84 1221h46M78 1225h54M82 1229h52M76 1233h58M80 1237h54M78 1241h56M92 1245h36"/></g>
      <g stroke="#f5305a" stroke-width="2.200"><path d="M1030 1152h30M1005 1155h70M998 1158h82M994 1161h86M992 1164h88M988 1167h92M994 1170h86M998 1173h82M1006 1176h74M1026 1179h54M1050 1183h28"/></g>
    </g>
    <g fill="none" stroke="#ff2a00" stroke-linecap="round">
      <path d="M208 1215L933 1168" stroke-width="6.500"/>
      <path d="M895 1142L933 1168 905 1210" stroke-width="6.500"/>
      <ellipse cx="1031" cy="1153" rx="100" ry="98" stroke-width="2.500"/>
    </g>
  </svg>
  <div class="absolute left-[958px] top-[899px] origin-left scale-x-[1.06] text-[85px] leading-[115px] text-[#ff2d00] font-['Noto_Sans_CJK_KR',sans-serif] whitespace-nowrap">확대</div>
</div>
</body>
</html>
